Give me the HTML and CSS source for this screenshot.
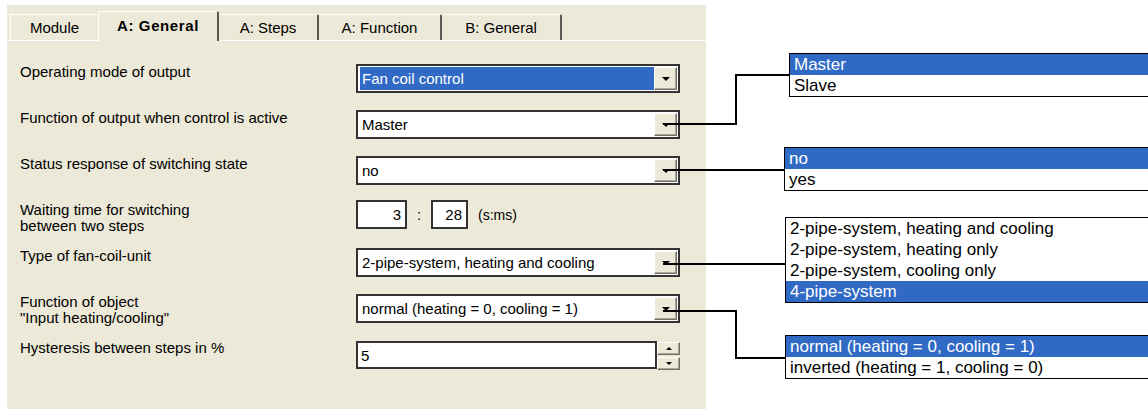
FILE: index.html
```html
<!DOCTYPE html>
<html>
<head>
<meta charset="utf-8">
<link rel="stylesheet" href="styles.css">
</head>
<body>

<div class="page">
    <div class="panel">
        <div class="tabs">
            <div class="tab">Module</div>
            <div class="tab active">A: General</div>
            <div class="tab">A: Steps</div>
            <div class="tab">A: Function</div>
            <div class="tab">B: General</div>
        </div>

        <div class="form">
            <div class="label">Operating mode of output</div>
            <div class="combo">
                <span class="value"><span class="chosen">Fan coil control</span></span>
                <span class="drop"><i class="arrow"></i></span>
            </div>

            <div class="label">Function of output when control is active</div>
            <div class="combo">
                <span class="value">Master</span>
                <span class="drop"><i class="arrow"></i></span>
            </div>

            <div class="label">Status response of switching state</div>
            <div class="combo">
                <span class="value">no</span>
                <span class="drop"><i class="arrow"></i></span>
            </div>

            <div class="label">Waiting time for switching<br>between two steps</div>
            <div class="time">
                <span class="box sec">3</span>
                <span class="colon">:</span>
                <span class="box ms">28</span>
                <span class="unit">(s:ms)</span>
            </div>

            <div class="label">Type of fan-coil-unit</div>
            <div class="combo">
                <span class="value">2-pipe-system, heating and cooling</span>
                <span class="drop"><i class="arrow"></i></span>
            </div>

            <div class="label">Function of object<br>"Input heating/cooling"</div>
            <div class="combo">
                <span class="value">normal (heating = 0, cooling = 1)</span>
                <span class="drop"><i class="arrow"></i></span>
            </div>

            <div class="label">Hysteresis between steps in %</div>
            <div class="spin">
                <span class="box field">5</span>
                <span class="spin-buttons">
                    <span class="spin-btn"><i class="arrow up"></i></span>
                    <span class="spin-btn"><i class="arrow"></i></span>
                </span>
            </div>
        </div>
    </div>

    <div class="callouts">
        <ul class="list list-mode">
            <li class="on">Master</li>
            <li>Slave</li>
        </ul>
        <ul class="list list-status">
            <li class="on">no</li>
            <li>yes</li>
        </ul>
        <ul class="list list-type">
            <li>2-pipe-system, heating and cooling</li>
            <li>2-pipe-system, heating only</li>
            <li>2-pipe-system, cooling only</li>
            <li class="on">4-pipe-system</li>
        </ul>
        <ul class="list list-object">
            <li class="on">normal (heating = 0, cooling = 1)</li>
            <li>inverted (heating = 1, cooling = 0)</li>
        </ul>
    </div>

    <!-- lines from the drop buttons to the option lists -->
    <svg class="wires" width="1148" height="409">
        <path d="M663 124 H736 V75 H789" />
        <path d="M663 170 H784" />
        <path d="M663 264 H785" />
        <path d="M663 311 H736 V358 H785" />
    </svg>
</div>

</body>
</html>
```

FILE: styles.css
```css
body {
    margin: 0;
    background: #fff;
    font-family: "Liberation Sans", Arial, sans-serif;
    font-size: 15px;
    color: #000;
    overflow: hidden;
}

.page {
    position: relative;
    display: flex;
    width: 1148px;
    height: 409px;
}

.panel {
    margin: 5px 0 0 7px;
    width: 699px;
    height: 404px;
    background: #ECE9D8;
}

/* tab strip */
.tabs {
    display: flex;
    align-items: flex-end;
    height: 35px;
    padding-left: 3px;
    border-bottom: 1px solid #fff;
}
.tab {
    box-sizing: border-box;
    height: 26px;
    line-height: 25px;
    text-align: center;
    border-top: 1px solid #fff;
    border-left: 1px solid #fff;
    border-right: 2px solid #5a5850;
    border-radius: 2px 2px 0 0;
}
.tab:nth-child(1) { width: 88px; border-right: none; }
.tab:nth-child(2) { width: 121px; }
.tab:nth-child(3) { width: 100px; border-left: none; }
.tab:nth-child(4) { width: 123px; border-left: none; }
.tab:nth-child(5) { width: 120px; border-left: none; }
.tab.active {
    height: 30px;
    line-height: 28px;
    margin-bottom: -1px;
    background: #ECE9D8;
    font-weight: bold;
    letter-spacing: 0.6px;
}

/* parameter rows */
.form {
    display: grid;
    grid-template-columns: 336px 324px;
    grid-auto-rows: 46px;
    align-items: start;
    margin-top: 23px;
    padding-left: 13px;
}
.label {
    line-height: 16px;
}

.combo {
    box-sizing: border-box;
    display: flex;
    height: 29px;
    padding: 1px;
    background: #fff;
    border: 2px solid #333;
}
.value {
    flex: 1;
    line-height: 23px;
    padding-left: 3px;
    white-space: nowrap;
}
.chosen {
    display: block;
    margin: 0 0 0 -2px;
    padding-left: 2px;
    background: #316AC5;
    color: #fff;
}

.drop,
.spin-btn {
    box-sizing: border-box;
    display: flex;
    align-items: center;
    justify-content: center;
    background: #ECE9D8;
    border-top: 1px solid #fff;
    border-left: 1px solid #fff;
    border-right: 1px solid #716F64;
    border-bottom: 1px solid #716F64;
    box-shadow: inset -1px -1px 0 #ACA899;
}
.drop {
    width: 23px;
    height: 23px;
}
.arrow {
    width: 0;
    height: 0;
    border-left: 4px solid transparent;
    border-right: 4px solid transparent;
    border-top: 4px solid #000;
}
.arrow.up {
    border-top: none;
    border-bottom: 4px solid #000;
}

/* time fields */
.time {
    display: flex;
    align-items: center;
    margin-top: -2px;
}
.box {
    box-sizing: border-box;
    height: 29px;
    line-height: 25px;
    background: #fff;
    border: 2px solid #333;
}
.sec {
    width: 51px;
    text-align: right;
    padding-right: 4px;
}
.ms {
    width: 37px;
    text-align: right;
    padding-right: 4px;
}
.colon {
    width: 24px;
    text-align: center;
}
.unit {
    margin-left: 10px;
    font-size: 14px;
}

/* spin field */
.spin {
    display: flex;
    margin-top: 1px;
}
.field {
    width: 301px;
    height: 28px;
    padding-left: 3px;
}
.spin-buttons {
    display: flex;
    flex-direction: column;
    gap: 2px;
    padding-top: 1px;
}
.spin-btn {
    width: 23px;
    height: 13px;
}
.spin-btn .arrow {
    border-left-width: 3px;
    border-right-width: 3px;
    border-top-width: 3px;
}
.spin-btn .arrow.up {
    border-bottom-width: 3px;
}

/* option lists, cut off by the right edge of the picture */
.callouts {
    position: relative;
    flex: 1;
    overflow: hidden;
}
.list {
    position: absolute;
    right: 0;
    margin: 0;
    padding: 0;
    list-style: none;
    background: #fff;
    border: 1px solid #000;
    border-right: none;
    font-size: 17px;
}
.list li {
    line-height: 21px;
    padding-left: 4px;
    white-space: nowrap;
}
.list li.on {
    background: #316AC5;
    color: #fff;
}
.list-mode { left: 83px; top: 53px; }
.list-status { left: 78px; top: 147px; }
.list-type { left: 79px; top: 217px; }
.list-object { left: 79px; top: 335px; }

.wires {
    position: absolute;
    left: 0;
    top: 0;
    pointer-events: none;
}
.wires path {
    fill: none;
    stroke: #000;
    stroke-width: 2;
}
```
